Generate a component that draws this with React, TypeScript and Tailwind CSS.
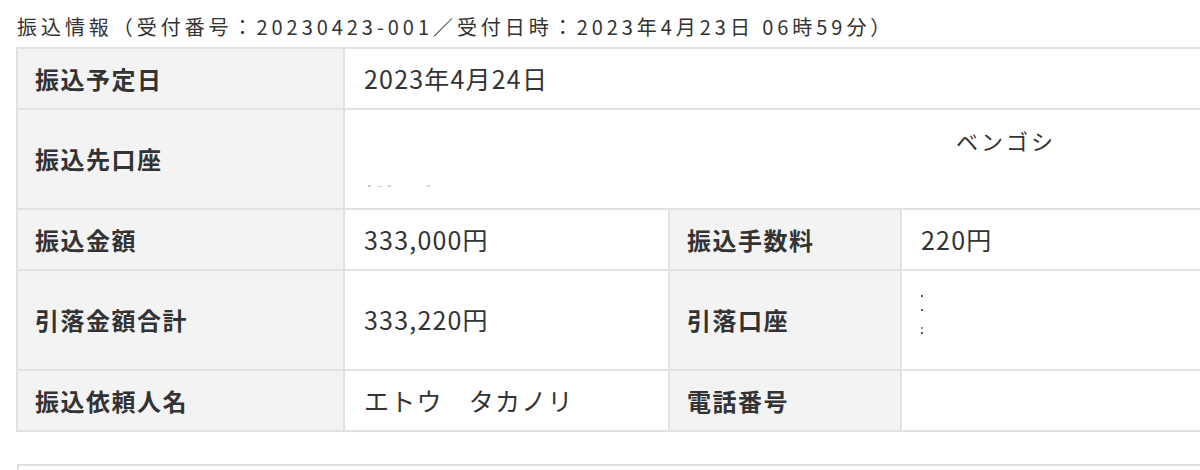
import React from "react";

const font = { fontFamily: '"Noto Sans CJK JP", "Noto Sans", sans-serif' };

function Label({ children, h }: { children: React.ReactNode; h: string }) {
  return (
    <td
      className={`border-2 border-[#e2e2e2] bg-[#f3f3f3] pl-[17px] align-middle text-[24px] font-bold tracking-[1.5px] text-[#333] ${h}`}
    >
      {children}
    </td>
  );
}

function Val({ children, colSpan }: { children?: React.ReactNode; colSpan?: number }) {
  return (
    <td
      colSpan={colSpan}
      className="border-2 border-[#e2e2e2] bg-white pl-[19px] align-middle text-[25px] tracking-[1.2px] text-[#333]"
    >
      {children}
    </td>
  );
}

export default function App() {
  return (
    <div className="h-[470px] w-[1200px] overflow-hidden bg-white" style={font}>
      <div className="pl-[17px] pt-[13px] text-[20px] leading-[28px] tracking-[3.95px] text-[#333]">
        振込情報（受付番号：20230423-001／受付日時：2023年4月23日 06時59分）
      </div>
      <table className="ml-[16px] mt-[6px] w-[1192px] table-fixed border-collapse">
        <colgroup>
          <col className="w-[327px]" />
          <col className="w-[325px]" />
          <col className="w-[232px]" />
          <col />
        </colgroup>
        <tbody>
          <tr>
            <Label h="h-[61px]">振込予定日</Label>
            <Val colSpan={3}>2023年4月24日</Val>
          </tr>
          <tr>
            <Label h="h-[100px]">振込先口座</Label>
            <td colSpan={3} className="h-[100px] border-2 border-[#e2e2e2] bg-white align-top text-[#333]">
              <div className="flex h-full flex-col pl-[21px] pt-[14px]">
                <div className="pl-[590px] text-[22px] leading-[32px] tracking-[3px]">ベンゴシ</div>
                <div className="mt-[29px] flex items-center gap-[6px] pl-[2px]">
                  <span className="h-[2px] w-[3px] bg-[#c8c8c8]" />
                  <span className="h-[1px] w-[5px] bg-[#d5d5d5]" />
                  <span className="h-[2px] w-[3px] bg-[#cfcfcf]" />
                  <span className="ml-[30px] h-[2px] w-[3px] bg-[#d8d8d8]" />
                </div>
              </div>
            </td>
          </tr>
          <tr>
            <Label h="h-[61px]">振込金額</Label>
            <Val>333,000円</Val>
            <Label h="h-[61px]">振込手数料</Label>
            <Val>220円</Val>
          </tr>
          <tr>
            <Label h="h-[100px]">引落金額合計</Label>
            <Val>333,220円</Val>
            <Label h="h-[100px]">引落口座</Label>
            <td className="h-[100px] border-2 border-[#e2e2e2] bg-white align-top">
              <div className="flex flex-col pl-[19px] pt-[24px]">
                <span className="h-[2px] w-[2px] bg-[#555]" />
                <span className="mt-[12px] h-[2px] w-[2px] bg-[#555]" />
                <span className="mt-[16px] h-[2px] w-[2px] bg-[#888]" />
                <span className="mt-[3px] h-[2px] w-[2px] bg-[#555]" />
              </div>
            </td>
          </tr>
          <tr>
            <Label h="h-[61px]">振込依頼人名</Label>
            <Val>エトウ　タカノリ</Val>
            <Label h="h-[61px]">電話番号</Label>
            <Val />
          </tr>
        </tbody>
      </table>
      <div className="ml-[17px] mt-[32px] h-[6px] border-t-2 border-l-2 border-[#e2e2e2]" />
    </div>
  );
}
